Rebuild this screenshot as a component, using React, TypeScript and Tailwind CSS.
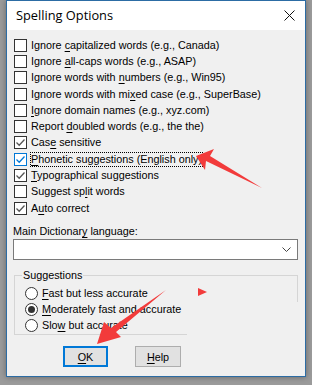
import type { ReactNode } from "react"

interface CheckItem {
  label: ReactNode
  checked: boolean
  focused?: boolean
}

const U = ({ children }: { children: ReactNode }) => <span className="underline underline-offset-2">{children}</span>

const items: CheckItem[] = [
  { label: <>Ignore <U>c</U>apitalized words (e.g., Canada)</>, checked: false },
  { label: <>Ignore <U>a</U>ll-caps words (e.g., ASAP)</>, checked: false },
  { label: <>Ignore words with <U>n</U>umbers (e.g., Win95)</>, checked: false },
  { label: <>Ignore words with mi<U>x</U>ed case (e.g., SuperBase)</>, checked: false },
  { label: <><U>I</U>gnore domain names (e.g., xyz.com)</>, checked: false },
  { label: <>Report <U>d</U>oubled words (e.g., the the)</>, checked: false },
  { label: <>Cas<U>e</U> sensitive</>, checked: true },
  { label: <><U>P</U>honetic suggestions (English only)</>, checked: true, focused: true },
  { label: <><U>T</U>ypographical suggestions</>, checked: true },
  { label: <>Suggest sp<U>l</U>it words</>, checked: false },
  { label: <>A<U>u</U>to correct</>, checked: true },
]

function Box({ checked, focused }: { checked: boolean; focused?: boolean }) {
  return (
    <span
      className={`flex h-[13px] w-[13px] shrink-0 items-center justify-center border bg-white ${
        focused ? "border-[#0078d7]" : "border-[#333333]"
      }`}
    >
      {checked && (
        <svg width="11" height="11" viewBox="0 0 11 11">
          <path d="M1.5 5.5 L4.2 8.2 L9.5 2.5" fill="none" stroke={focused ? "#0078d7" : "#555555"} strokeWidth="1.3" />
        </svg>
      )}
    </span>
  )
}

function Radio({ checked, label }: { checked: boolean; label: ReactNode }) {
  return (
    <div className="flex h-[16px] items-center gap-[4px]">
      <span className="flex h-[13px] w-[13px] items-center justify-center rounded-full border border-[#333333] bg-white">
        {checked && <span className="h-[7px] w-[7px] rounded-full bg-[#333333]" />}
      </span>
      <span>{label}</span>
    </div>
  )
}

export default function App() {
  return (
    <div className="relative h-[385px] w-[312px] overflow-hidden bg-[#9b9b9b] font-['Liberation_Sans',Arial,sans-serif] text-[10.8px] leading-[14px] text-black">
      <div className="ml-[6px] flex h-[377px] w-[300px] flex-col border border-[#2c6ca4] bg-[#f0f0f0] shadow-[0_0_6px_rgba(0,0,0,0.35)]">
        {/* title bar */}
        <div className="flex h-[29px] items-center justify-between bg-white pl-[9px] pr-[10px]">
          <span className="font-['Open_Sans',sans-serif] text-[12.8px] leading-none">Spelling Options</span>
          <svg width="11" height="11" viewBox="0 0 11 11">
            <path d="M0.5 0.5 L10.5 10.5 M10.5 0.5 L0.5 10.5" stroke="#111" strokeWidth="1" />
          </svg>
        </div>

        {/* options */}
        <div className="flex flex-col pl-[7px] pt-[7px]">
          {items.map((it, i) => (
            <div key={i} className="flex h-[16.3px] items-center gap-[4px]">
              <Box checked={it.checked} focused={it.focused} />
              <span className={`leading-[13px] ${it.focused ? "outline outline-1 outline-dotted outline-black" : ""}`}>
                {it.label}
              </span>
            </div>
          ))}
        </div>

        <div className="mt-[8px] pl-[6px]">
          Main Dictionar<U>y</U> language:
        </div>
        <div className="ml-[6px] mt-[1px] flex h-[21px] w-[285px] items-center justify-end border border-[#7a7a7a] bg-white pr-[6px]">
          <svg width="9" height="6" viewBox="0 0 9 6">
            <path d="M0.5 0.5 L4.5 4.5 L8.5 0.5" fill="none" stroke="#444" strokeWidth="1" />
          </svg>
        </div>

        {/* suggestions group */}
        <div className="relative ml-[7px] mt-[15px] h-[60px] w-[284px] border border-[#d5d5d5]">
          <span className="absolute -top-[8px] left-[7px] bg-[#f0f0f0] px-[1px]">Suggestions</span>
          <div className="absolute bottom-[-1px] right-[-1px] h-[33px] w-[111px] bg-[#f0f0f0]" />
          <div className="relative flex flex-col pl-[10px] pt-[9px]">
            <Radio checked={false} label={<><U>F</U>ast but less accurate</>} />
            <Radio checked label={<><U>M</U>oderately fast and accurate</>} />
            <Radio checked={false} label={<>Slo<U>w</U> but accurate</>} />
          </div>
        </div>

        <div className="ml-[56px] mt-[11px] flex gap-[27px]">
          <button className="h-[21px] w-[45px] border-2 border-[#0078d7] bg-[#e1e1e1]">
            <U>O</U>K
          </button>
          <button className="h-[21px] w-[46px] border border-[#adadad] bg-[#e1e1e1]">
            <U>H</U>elp
          </button>
        </div>
      </div>

      {/* red annotation arrows */}
      <svg className="pointer-events-none absolute left-0 top-0" width="312" height="385" viewBox="0 0 312 385">
        <polygon points="196,156 214,149 210,156 262,188 206,161 205,170" fill="#f23b3b" />
        <polygon points="198,288 207,292 198,296" fill="#f23b3b" />
        <polygon points="97,344 104,322 111,328 166,290 116,332 121,337" fill="#f23b3b" />
      </svg>
    </div>
  )
}
